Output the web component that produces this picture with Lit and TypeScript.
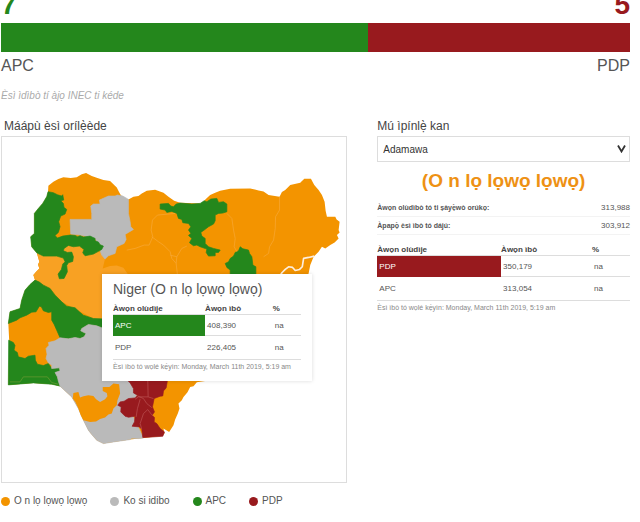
import { LitElement, css, html, svg } from 'lit';
import { customElement, property, state } from 'lit/decorators.js';

type Status = 'inconclusive' | 'none' | 'apc' | 'pdp';

interface PartyResult {
  party: string;
  status: Status;
  votes: string;
  share: string;
}

interface Region {
  status: Status | 'active';
  points: string;
}

const UPDATED = 'Èsì ìbò tó wọlé kẹ́yìn: Monday, March 11th 2019, 5:19 am';

const LEGEND: { status: Status; label: string }[] = [
  { status: 'inconclusive', label: 'O n lọ lọwọ lọwọ' },
  { status: 'none', label: 'Ko si idibo' },
  { status: 'apc', label: 'APC' },
  { status: 'pdp', label: 'PDP' },
];

// Painted in order, the first one is the outline of the whole country.
const REGIONS: Region[] = [
  {
    status: 'inconclusive',
    points: `144,575 145,557 160,545 175,537 190,532 212,534 230,532 245,523 258,519 275,528 292,534
      310,540 330,543 350,562 356,574 362,585 372,596 385,598 400,590 415,588 425,580 440,572 465,569
      490,578 505,590 522,602 540,608 605,610 617,597 630,585 645,578 660,572 690,566 750,565 775,571
      790,574 805,585 838,590 845,576 855,570 870,555 900,548 912,536 932,536 942,555 955,570 965,585
      973,605 976,632 980,650 1005,650 1009,658 1018,665 1015,690 1018,697 1010,705 1015,715 1003,727
      990,735 975,745 965,740 955,755 940,770 930,795 925,820 890,900 800,1020 700,1130 590,1146
      580,1158 570,1160 562,1176 550,1190 545,1200 535,1210 538,1225 533,1240 525,1258 520,1275
      507,1295 490,1285 493,1300 485,1307 430,1313 390,1318 310,1330 290,1320 275,1303 265,1290
      250,1260 235,1225 215,1190 180,1158 155,1152 100,1148 25,1154 28,1030 25,970 30,935 60,925
      65,900 75,870 90,853 105,840 100,825 108,815 118,805 114,793 118,785 110,758 95,740 92,710
      103,700 103,640 115,625 128,610 140,590`,
  },
  {
    status: 'active',
    points: `110,755 245,730 250,765 300,755 315,775 308,805 330,798 350,796 370,803 383,822 383,860
      308,980 280,955 185,905 150,865 105,840 100,825 118,805 114,793 118,785`,
  },
  {
    status: 'none',
    points: `210,658 275,658 275,640 272,618 280,612 300,612 298,600 305,597 325,588 345,588 352,585
      368,588 385,598 385,640 390,665 392,680 400,688 385,697 375,703 378,718 372,730 350,740 345,760
      325,767 315,777 305,765 300,752 308,740 290,725 285,715 240,705 212,702`,
  },
  {
    status: 'apc',
    points: `144,575 160,578 172,584 185,588 188,584 191,600 182,602 190,610 192,622 200,628 195,642
      182,648 176,665 180,680 175,697 165,706 172,714 188,708 210,705 225,706 232,710 240,707 250,711
      270,708 285,715 285,722 295,726 300,734 310,738 305,748 296,753 280,762 255,767 248,758 252,748
      238,738 220,740 205,736 192,745 190,752 202,757 215,756 220,770 218,784 205,788 200,796 202,815
      192,835 178,836 174,822 184,808 188,792 195,785 190,774 170,768 130,768 110,758 95,740 92,710
      103,700 103,640 115,625 128,610 140,590`,
  },
  {
    status: 'apc',
    points: `480,612 505,610 512,618 520,620 528,612 540,609 575,612 600,610 612,602 620,605 632,597
      650,595 655,607 670,605 680,612 680,635 668,639 655,640 645,645 645,662 640,672 625,680 612,690
      602,697 605,708 615,715 615,730 625,740 640,745 660,750 655,757 645,757 645,767 625,768 618,757
      620,747 600,740 590,735 580,737 568,728 575,715 565,706 572,700 565,690 572,680 565,670 548,668
      545,658 535,655 530,640 515,634 500,637 495,630 480,627`,
  },
  {
    status: 'apc',
    points: `720,740 728,746 745,750 748,760 755,770 758,795 767,800 767,850 690,850 690,810 680,802
      675,790 685,785 690,775 700,768 705,757 715,752`,
  },
  {
    status: 'apc',
    points: `105,840 118,846 130,855 150,865 165,885 185,905 200,918 225,923 238,935 250,945 280,955
      330,957 330,985 308,984 290,977 265,973 245,985 242,992 258,1000 252,1010 240,1015 225,1012
      205,1016 180,1013 170,990 162,972 155,960 155,935 145,937 130,932 124,920 118,918 108,935
      95,936 80,945 60,953 50,960 25,970 30,935 60,925 65,900 75,870 90,853`,
  },
  {
    status: 'apc',
    points: `26,1020 40,1027 45,1036 42,1050 52,1057 55,1070 75,1075 85,1068 105,1065 106,1080
      112,1092 130,1096 145,1090 155,1105 178,1103 180,1112 165,1117 172,1130 175,1143 182,1158
      155,1152 100,1148 25,1154`,
  },
  {
    status: 'none',
    points: `180,1013 205,1016 225,1012 240,1015 252,1010 258,1000 242,992 245,985 265,973 290,977
      308,984 400,984 410,1180 400,1250 430,1313 415,1315 395,1314 390,1318 340,1325 310,1330 290,1320
      275,1303 265,1290 250,1260 235,1225 215,1190 180,1158 175,1143 172,1130 165,1117 180,1112
      178,1103 155,1105 155,1095 145,1088 138,1075 141,1062 138,1045 147,1035 145,1027 165,1022`,
  },
  {
    status: 'inconclusive',
    points: `220,1178 235,1175 240,1192 250,1188 265,1185 280,1187 288,1197 300,1205 315,1197 322,1188
      320,1178 308,1172 308,1160 328,1160 340,1150 357,1152 360,1180 352,1200 350,1215 340,1225
      335,1240 325,1243 315,1252 300,1256 288,1264 270,1265 250,1260 242,1245 235,1225 226,1205
      218,1195`,
  },
  {
    status: 'pdp',
    points: `380,1138 390,1148 400,1165 400,1178 412,1185 405,1193 385,1195 372,1203 360,1205
      353,1215 363,1220 362,1235 375,1248 385,1251 405,1248 403,1265 396,1278 418,1280 425,1287
      428,1312 488,1308 493,1295 480,1285 470,1270 462,1265 463,1252 456,1245 463,1235 457,1220
      462,1195 480,1188 488,1187 490,1172 498,1163 502,1140`,
  },
];

const BORDERS: { kind: string; points: string }[] = [
  { kind: 'warm', points: '525,640 472,645 457,660 453,690 458,710 447,735 432,735 405,745 380,750' },
  { kind: 'warm', points: '455,710 475,725 490,735 510,755 515,775 528,790 532,825' },
  { kind: 'warm', points: '510,765 530,770 528,790' },
  { kind: 'warm', points: '530,770 545,745 560,738' },
  { kind: 'warm', points: '680,640 695,655 700,690 705,715 702,740 710,755' },
  { kind: 'warm', points: '838,590 838,630 826,650 825,685 820,720 808,740 805,760 790,770' },
  { kind: 'leaf', points: '30,1145 60,1145 70,1130 142,1130 155,1147 175,1152' },
  { kind: 'wine', points: '443,1140 444,1190 415,1190 405,1197' },
  { kind: 'wine', points: '412,1187 430,1195 440,1210 455,1222' },
  { kind: 'wine', points: '420,1197 412,1225 408,1250' },
  { kind: 'wine', points: '444,1190 460,1195' },
  { kind: 'wine', points: '425,1287 420,1270 430,1240 443,1228 452,1240 460,1248' },
  { kind: 'picked', points: '838,830 845,818 855,808 865,800 877,802 885,811 898,808 906,800 910,775 925,772 942,768' },
];

@customElement('result-table')
export class ResultTable extends LitElement {
  @property({ type: Array })
  rows: PartyResult[] = [];

  static styles = css`
    :host {
      display: block;
    }

    table {
      width: 100%;
      table-layout: fixed;
      border-collapse: separate;
      border-spacing: 0;
      font-size: 8px;
      color: #555;
    }

    th,
    td {
      padding: 0 2px;
      text-align: left;
      border-bottom: 1px solid #ddd;
    }

    th {
      height: 10px;
      padding: 0;
      line-height: 10px;
      color: #444;
    }

    td {
      height: 23px;
    }

    .candidate {
      width: 49%;
    }

    .votes {
      width: 36%;
    }

    .leader td {
      height: 20px;
    }

    .leader .party {
      color: #fff;
    }

    .leader .apc {
      background: #24871c;
      border-color: #24871c;
    }

    .leader .pdp {
      background: #981a1e;
      border-color: #981a1e;
    }

    .updated {
      margin: 0;
      font-size: 7px;
      line-height: 14px;
      color: #888;
      white-space: nowrap;
    }
  `;

  render() {
    return html`
      <table>
        <thead>
          <tr>
            <th class="candidate">Àwọn olùdìje</th>
            <th class="votes">Àwọn ìbò</th>
            <th>%</th>
          </tr>
        </thead>
        <tbody>
          ${this.rows.map(
            (row, index) => html`<tr class=${index === 0 ? 'leader' : ''}>
              <td class="party ${row.status}">${row.party}</td>
              <td>${row.votes}</td>
              <td>${row.share}</td>
            </tr>`,
          )}
        </tbody>
      </table>
      <p class="updated">${UPDATED}</p>
    `;
  }
}

@customElement('state-map')
export class StateMap extends LitElement {
  static styles = css`
    :host {
      display: block;
      border: 1px solid #ddd;
    }

    svg {
      display: block;
      width: 100%;
    }

    .inconclusive {
      fill: #f39400;
    }

    .active {
      fill: #f8a123;
    }

    .none {
      fill: #bababa;
      stroke: #bababa;
      stroke-width: 2;
    }

    .apc {
      fill: #24871c;
      stroke: #24871c;
      stroke-width: 2;
    }

    .pdp {
      fill: #981a1e;
      stroke: #981a1e;
      stroke-width: 2;
    }

    .border {
      fill: none;
      stroke-width: 2;
      stroke-linejoin: round;
    }

    .warm {
      stroke: #f8a93a;
    }

    .leaf {
      stroke: #6f9c33;
    }

    .wine {
      stroke: #bd5555;
    }

    .picked {
      stroke: #fdeedd;
      stroke-width: 5;
    }
  `;

  render() {
    return html`
      <svg viewBox="6 411 1032 1035" role="img" aria-label="Máápù èsì orílẹ̀ède">
        ${REGIONS.map((region) => svg`<polygon class=${region.status} points=${region.points} />`)}
        ${BORDERS.map((line) => svg`<polyline class="border ${line.kind}" points=${line.points} />`)}
      </svg>
    `;
  }
}

@customElement('app-root')
export class AppRoot extends LitElement {
  @state()
  private selected = 'Adamawa';

  private hovered: PartyResult[] = [
    { party: 'APC', status: 'apc', votes: '408,390', share: 'na' },
    { party: 'PDP', status: 'pdp', votes: '226,405', share: 'na' },
  ];

  private results: PartyResult[] = [
    { party: 'PDP', status: 'pdp', votes: '350,179', share: 'na' },
    { party: 'APC', status: 'apc', votes: '313,054', share: 'na' },
  ];

  static styles = css`
    :host {
      display: block;
      padding: 0 10px 0 1px;
      background: #fff;
      color: #555;
      font-family: 'Liberation Sans', Arial, sans-serif;
    }

    .scores {
      display: flex;
      justify-content: space-between;
      align-items: flex-end;
      height: 23px;
      overflow: hidden;
      font-size: 28px;
      font-weight: bold;
      line-height: 36px;
    }

    .score-apc {
      color: #24871c;
    }

    .score-pdp {
      color: #981a1e;
    }

    .bar {
      display: flex;
      height: 29px;
    }

    .bar-apc {
      background: #24871c;
    }

    .bar-pdp {
      background: #981a1e;
    }

    .parties {
      display: flex;
      justify-content: space-between;
      font-size: 16px;
      line-height: 28px;
    }

    .source {
      margin: 6px 0 10px;
      font-size: 10px;
      line-height: 20px;
      font-style: italic;
      color: #aaa;
    }

    .columns {
      display: grid;
      grid-template-columns: 37fr 27fr;
      column-gap: 30px;
      align-items: start;
    }

    .title {
      display: block;
      margin: 0;
      font-size: 12px;
      font-weight: normal;
      line-height: 20px;
      color: #444;
    }

    .map-title {
      padding-left: 3px;
    }

    .map {
      position: relative;
    }

    .tooltip {
      position: absolute;
      top: 138px;
      left: 101px;
      box-sizing: border-box;
      width: 210px;
      padding: 5px 11px 7px;
      background: #fff;
      box-shadow: 0 0 4px rgba(0, 0, 0, 0.15);
    }

    .tooltip-title {
      margin: 0 0 5px;
      font-size: 14px;
      font-weight: normal;
      line-height: 20px;
      white-space: nowrap;
    }

    .legend {
      display: flex;
      flex-wrap: wrap;
      gap: 4px 23px;
      margin: 10px 0 0;
      padding: 0;
      list-style: none;
      font-size: 10px;
      line-height: 16px;
    }

    .legend-item {
      display: flex;
      align-items: center;
      gap: 4px;
    }

    .dot {
      width: 9px;
      height: 9px;
      border-radius: 50%;
    }

    .dot.inconclusive {
      background: #f39400;
    }

    .dot.none {
      background: #bababa;
    }

    .dot.apc {
      background: #24871c;
    }

    .dot.pdp {
      background: #981a1e;
    }

    .picker {
      display: grid;
      align-items: center;
    }

    .picker > * {
      grid-area: 1 / 1;
    }

    select {
      appearance: none;
      width: 100%;
      height: 26px;
      padding: 0 5px;
      border: 1px solid #ddd;
      border-radius: 0;
      background: #fff;
      color: #333;
      font: inherit;
      font-size: 10px;
    }

    .chevron {
      justify-self: end;
      width: 9px;
      height: 8px;
      margin-right: 4px;
      pointer-events: none;
    }

    .outcome {
      margin: 6px 0 5px;
      font-size: 19px;
      line-height: 26px;
      text-align: center;
      color: #ee9114;
    }

    .totals {
      margin: 0 0 10px;
    }

    .total {
      display: flex;
      justify-content: space-between;
      border-bottom: 1px solid #f3f3f3;
      font-size: 7px;
      line-height: 17px;
    }

    .total dt {
      font-weight: bold;
    }

    .total dd {
      margin: 0;
      font-size: 8px;
    }
  `;

  render() {
    return html`
      <div class="scores">
        <span class="score-apc">7</span>
        <span class="score-pdp">5</span>
      </div>
      <div class="bar">
        <div class="bar-apc" style="flex: 7"></div>
        <div class="bar-pdp" style="flex: 5"></div>
      </div>
      <div class="parties"><span>APC</span><span>PDP</span></div>
      <p class="source">Èsì ìdìbò tí àjọ INEC ti kéde</p>
      <div class="columns">
        <section>
          <h2 class="title map-title">Máápù èsì orílẹ̀ède</h2>
          <div class="map">
            <state-map></state-map>
            <div class="tooltip" role="tooltip">
              <h3 class="tooltip-title">Niger (O n lọ lọwọ lọwọ)</h3>
              <result-table .rows=${this.hovered}></result-table>
            </div>
          </div>
          <ul class="legend">
            ${LEGEND.map(
              (item) => html`<li class="legend-item"><i class="dot ${item.status}"></i>${item.label}</li>`,
            )}
          </ul>
        </section>
        <section>
          <label class="title" for="state">Mú ìpínlẹ̀ kan</label>
          <div class="picker">
            <select id="state" @change=${this.onStateChange}>
              ${['Adamawa', 'Niger'].map(
                (name) => html`<option ?selected=${name === this.selected}>${name}</option>`,
              )}
            </select>
            <svg class="chevron" viewBox="0 0 9 8" aria-hidden="true">
              <path d="M1 0.5 4.5 6.5 8 0.5" fill="none" stroke="#333" stroke-width="1.8" />
            </svg>
          </div>
          <h2 class="outcome">(O n lọ lọwọ lọwọ)</h2>
          <dl class="totals">
            <div class="total"><dt>Àwọn olùdìbò tó ti ṣàyẹ̀wò orúkọ:</dt><dd>313,988</dd></div>
            <div class="total"><dt>Àpapọ̀ èsì ìbò tó dájú:</dt><dd>303,912</dd></div>
          </dl>
          <result-table .rows=${this.results}></result-table>
        </section>
      </div>
    `;
  }

  private onStateChange(event: Event): void {
    this.selected = (event.target as HTMLSelectElement).value;
  }
}

declare global {
  interface HTMLElementTagNameMap {
    'result-table': ResultTable;
    'state-map': StateMap;
    'app-root': AppRoot;
  }
}
